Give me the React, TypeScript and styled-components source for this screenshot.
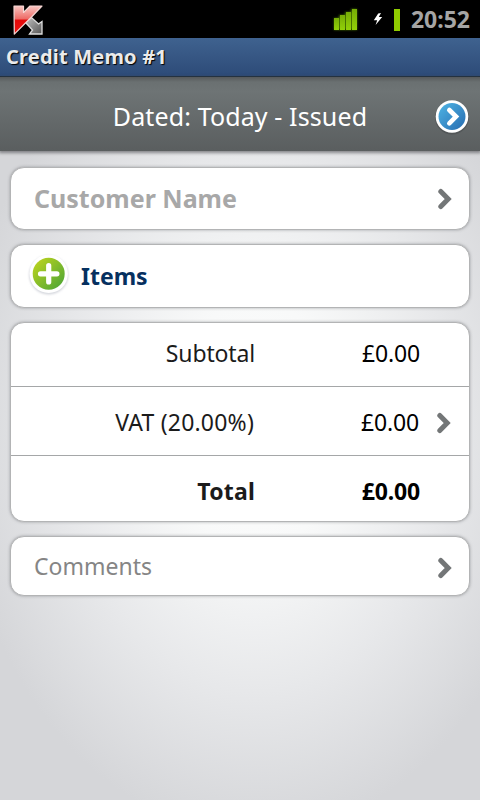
import React from "react";
import styled, { createGlobalStyle } from "styled-components";

const GlobalStyle = createGlobalStyle`
  * { box-sizing: border-box; }
  body { margin: 0; background: #d5d6d9; }
`;

const Screen = styled.div`
  display: flex;
  flex-direction: column;
  width: 480px;
  height: 800px;
  overflow: hidden;
  font-family: "Noto Sans", "Open Sans", sans-serif;
  background: radial-gradient(ellipse 300px 410px at 255px 425px, #fefefe 0%, #f8f9f9 30%, #e7e8ea 65%, #d5d6d9 100%);
`;

const StatusBar = styled.div`
  display: flex;
  align-items: center;
  height: 38px;
  padding: 0 10px 0 12px;
  background: #000;
`;

const StatusIcons = styled.div`
  display: flex;
  align-items: center;
  margin-left: auto;
`;

const Battery = styled.div`
  width: 6px;
  height: 22px;
  margin: 2px 11px 0 10px;
  background: #8fcb00;
`;

const Clock = styled.div`
  font-size: 23px;
  line-height: 38px;
  font-weight: 700;
  color: #a5a5a5;
`;

const TitleBar = styled.div`
  display: flex;
  align-items: center;
  height: 39px;
  padding: 0 6px 2px;
  border-bottom: 1px solid #1b2c3d;
  background: linear-gradient(#3f628f, #2d4b78);
  color: #ebebeb;
  font-size: 20px;
  font-weight: 700;
  letter-spacing: 0.2px;
  text-shadow: 1px 1px 1px #000;
`;

const Header = styled.div`
  display: flex;
  align-items: center;
  justify-content: center;
  position: relative;
  height: 74px;
  padding-top: 4px;
  background: linear-gradient(#56595a 0, #6a7071 5px, #6e7475 14px, #5a5e5f 100%);
  box-shadow: 0 1px 3px 1px rgba(70, 72, 75, 0.6);
  color: #fff;
  font-size: 25px;
  letter-spacing: 0.12px;
`;

const HeaderButton = styled.button`
  position: absolute;
  right: 10px;
  top: 22px;
  width: 36px;
  height: 36px;
  padding: 0;
  border: 0;
  background: none;
  svg { display: block; }
`;

const Content = styled.main`
  display: flex;
  flex-direction: column;
  padding: 16px 10px 0;
`;

const Card = styled.section<{ $height: number; $gap?: number }>`
  display: flex;
  align-items: center;
  height: ${(p) => p.$height}px;
  margin-bottom: ${(p) => p.$gap ?? 0}px;
  padding: 0 16px 0 23px;
  border: 1px solid #b3b4b5;
  border-radius: 14px;
  background: #fff;
  box-shadow: 0 0 3px rgba(90, 92, 96, 0.5);
`;

const TotalsCard = styled(Card)`
  flex-direction: column;
  align-items: stretch;
  padding: 0;
`;

const CardText = styled.span<{ $size: number; $color: string; $bold?: boolean; $lift?: number }>`
  flex: 1;
  padding-bottom: ${(p) => p.$lift ?? 0}px;
  font-size: ${(p) => p.$size}px;
  font-weight: ${(p) => (p.$bold ? 700 : 400)};
  color: ${(p) => p.$color};
`;

const ChevronSlot = styled.span<{ $drop?: number }>`
  display: flex;
  margin-top: ${(p) => p.$drop ?? 0}px;
`;

const AddIcon = styled.svg`
  display: block;
  margin: 0 10px 0 -7px;
`;

const TotalRow = styled.div<{ $height: number; $shift: number; $bold?: boolean }>`
  display: grid;
  grid-template-columns: 244px 165px 1fr;
  align-items: center;
  height: ${(p) => p.$height}px;
  padding-top: ${(p) => Math.max(p.$shift, 0)}px;
  padding-bottom: ${(p) => Math.max(-p.$shift, 0)}px;
  font-size: 23px;
  font-weight: ${(p) => (p.$bold ? 700 : 400)};
  text-align: right;

  & + & { border-top: 1px solid #a5a7a8; }
`;

const Label = styled.span<{ $spacing: number; $inset?: number }>`
  padding-right: ${(p) => p.$inset ?? 0}px;
  color: #1b1b1b;
  letter-spacing: ${(p) => p.$spacing}px;
`;

const Amount = styled.span<{ $inset?: number }>`
  padding-right: ${(p) => p.$inset ?? 0}px;
  color: #000;
  letter-spacing: -0.15px;
`;

const RowChevron = styled.span`
  display: flex;
  padding: 2px 0 0 16px;
`;

function Chevron() {
  return (
    <svg width="16" height="22" viewBox="0 0 16 22">
      <path d="M3.8 3.5 11.2 11 3.8 18.5" fill="none" stroke="#737677" strokeWidth="5" strokeLinecap="round" />
    </svg>
  );
}

function AntivirusLogo() {
  return (
    <svg width="32" height="32" viewBox="0 0 32 32">
      <defs>
        <linearGradient id="redFace" x1="0" y1="0" x2="0" y2="1">
          <stop offset="0" stopColor="#f8c6c2" />
          <stop offset=".46" stopColor="#ee6a65" />
          <stop offset=".5" stopColor="#e30909" />
          <stop offset="1" stopColor="#ee1515" />
        </linearGradient>
        <linearGradient id="steel" x1="0" y1="0" x2="1" y2="1">
          <stop offset="0" stopColor="#c2c2c2" />
          <stop offset="1" stopColor="#555" />
        </linearGradient>
      </defs>
      <path d="M13.5 19.5 19.5 14.5 26.5 21 30 18.5V31H17.5L20.5 27Z" fill="url(#steel)" stroke="#dedede" strokeWidth="1.3" />
      <path d="M2 3H11.5V9.5L18 3H30L19.5 14 2.3 31.2Z" fill="url(#redFace)" stroke="#f5d6d3" strokeWidth="1.2" strokeLinejoin="round" />
    </svg>
  );
}

const SignalSvg = styled.svg`
  display: block;
  margin-right: 11px;
`;

function Signal() {
  return (
    <SignalSvg width="30" height="28" viewBox="0 0 30 28">
      <defs>
        <linearGradient id="bars" x1="0" y1="0" x2="0" y2="1">
          <stop offset="0" stopColor="#76ad06" />
          <stop offset="1" stopColor="#92d008" />
        </linearGradient>
        <filter id="glow" x="-20%" y="-20%" width="140%" height="140%">
          <feGaussianBlur stdDeviation="1.2" />
        </filter>
      </defs>
      <path d="M3 13H8V10H14V7H20V4H26V25H3Z" fill="#447004" filter="url(#glow)" />
      <g fill="url(#bars)">
        <rect x="3" y="13" width="5" height="12" />
        <rect x="9" y="10" width="5" height="15" />
        <rect x="15" y="7" width="5" height="18" />
        <rect x="21" y="4" width="5" height="21" />
      </g>
    </SignalSvg>
  );
}

function Bolt() {
  return (
    <svg width="12" height="14" viewBox="0 0 12 14">
      <path d="M6.2 1.5 9 1 6.8 5H10.2L3.6 13 5.2 8.3H1.8Z" fill="#fff" />
    </svg>
  );
}

function NextIcon() {
  return (
    <svg width="36" height="36" viewBox="0 0 36 36">
      <defs>
        <linearGradient id="blue" x1="0" y1="0" x2="1" y2="1">
          <stop offset="0" stopColor="#4fb5e5" />
          <stop offset="1" stopColor="#266bb0" />
        </linearGradient>
      </defs>
      <circle cx="18" cy="18.5" r="17" fill="#444849" opacity=".5" />
      <circle cx="18" cy="17.5" r="16.3" fill="#fff" />
      <circle cx="18" cy="17.5" r="13.5" fill="url(#blue)" />
      <path d="M15.3 11 22 17.6 15.3 24.3" fill="none" stroke="#fff" strokeWidth="4.6" strokeLinecap="round" />
    </svg>
  );
}

function PlusIcon() {
  return (
    <AddIcon width="44" height="46" viewBox="0 0 44 46">
      <defs>
        <linearGradient id="green" x1="0" y1="0" x2="1" y2="1">
          <stop offset="0" stopColor="#c5d71c" />
          <stop offset="1" stopColor="#45a238" />
        </linearGradient>
        <filter id="soft" x="-20%" y="-20%" width="140%" height="140%">
          <feGaussianBlur stdDeviation="1" />
        </filter>
      </defs>
      <circle cx="21.7" cy="22" r="19.6" fill="#d3d5dc" filter="url(#soft)" />
      <circle cx="21.7" cy="20.8" r="19.2" fill="#fff" />
      <circle cx="21.7" cy="20.8" r="16" fill="url(#green)" />
      <path d="M21.7 12.6V29M13.5 20.8H29.9" stroke="#fff" strokeWidth="5.2" strokeLinecap="round" />
    </AddIcon>
  );
}

export default function App() {
  return (
    <Screen>
      <GlobalStyle />
      <StatusBar>
        <AntivirusLogo />
        <StatusIcons>
          <Signal />
          <Bolt />
          <Battery />
          <Clock>20:52</Clock>
        </StatusIcons>
      </StatusBar>
      <TitleBar>Credit Memo #1</TitleBar>
      <Header>
        Dated: Today - Issued
        <HeaderButton aria-label="Next"><NextIcon /></HeaderButton>
      </Header>
      <Content>
        <Card $height={63} $gap={14}>
          <CardText $size={25} $color="#a8a8a8" $lift={2} $bold>Customer Name</CardText>
          <ChevronSlot $drop={1}><Chevron /></ChevronSlot>
        </Card>
        <Card $height={64} $gap={14}>
          <PlusIcon />
          <CardText $size={23} $color="#06305f" $bold>Items</CardText>
        </Card>
        <TotalsCard $height={200} $gap={14}>
          <TotalRow $height={63} $shift={-4}>
            <Label $spacing={-0.15}>Subtotal</Label>
            <Amount>£0.00</Amount>
          </TotalRow>
          <TotalRow $height={69} $shift={2}>
            <Label $spacing={0.2} $inset={1}>VAT (20.00%)</Label>
            <Amount $inset={1}>£0.00</Amount>
            <RowChevron><Chevron /></RowChevron>
          </TotalRow>
          <TotalRow $height={66} $shift={5} $bold>
            <Label $spacing={0.2}>Total</Label>
            <Amount>£0.00</Amount>
          </TotalRow>
        </TotalsCard>
        <Card $height={60}>
          <CardText $size={23} $color="#858585">Comments</CardText>
          <ChevronSlot $drop={3}><Chevron /></ChevronSlot>
        </Card>
      </Content>
    </Screen>
  );
}
